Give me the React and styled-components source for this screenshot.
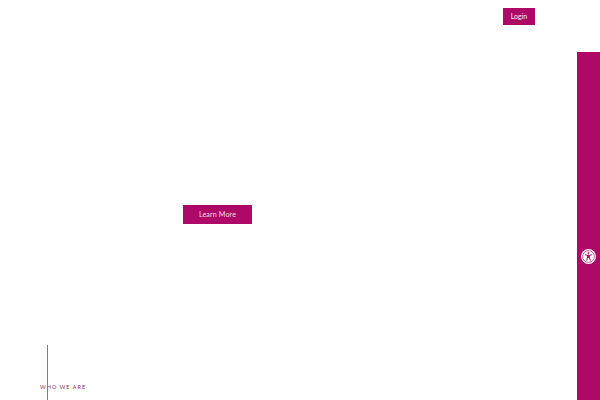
import styled, { createGlobalStyle } from "styled-components"

const Global = createGlobalStyle`
    html, body{
        margin: 0;
        padding: 0;
        background-color: #ffffff;
    }
    *{
        box-sizing: border-box;
    }
`

export default function App(){
    return (
        <Page>
            <Global />
            <Main>
                <Header>
                    <LoginButton>Login</LoginButton>
                </Header>
                <Hero>
                    <LearnButton>Learn More</LearnButton>
                </Hero>
                <Intro>
                    <IntroLabel>WHO WE ARE</IntroLabel>
                </Intro>
            </Main>
            <Sidebar>
                <AccessIcon viewBox="0 0 24 24" aria-label="Accessibility">
                    <circle cx="12" cy="12" r="12" fill="#fff" />
                    <circle cx="12" cy="12" r="9.4" fill="none" stroke="#ae0868" strokeWidth="1.1" />
                    <circle cx="12" cy="6.7" r="1.6" fill="#ae0868" />
                    <path
                        d="M6.8 9.2 L10.4 10.2 H13.6 L17.2 9.2 M10.6 10.4 V13.4 L9.2 18 M13.4 10.4 V13.4 L14.8 18 M10.6 13.2 H13.4"
                        fill="none"
                        stroke="#ae0868"
                        strokeWidth="1.6"
                        strokeLinecap="round"
                        strokeLinejoin="round"
                    />
                    <path d="M10.8 10.4 H13.2 V13.2 H10.8 Z" fill="#ae0868" />
                </AccessIcon>
            </Sidebar>
        </Page>
    )
}

const Page = styled.div`
    width: 600px;
    height: 400px;
    overflow: hidden;
    display: grid;
    grid-template-columns: 577px 23px;
    font-family: "Lato", "Liberation Sans", sans-serif;
`

const Main = styled.main`
    display: flex;
    flex-direction: column;
    height: 400px;
`

const Header = styled.header`
    display: flex;
    justify-content: flex-end;
    padding-top: 8px;
    padding-right: 42px;
`

const LoginButton = styled.button`
    width: 32px;
    height: 17px;
    padding: 0;
    border: none;
    background-color: #ae0868;
    color: #fdeef7;
    font-family: inherit;
    font-size: 7px;
    font-weight: 400;
    line-height: 17px;
`

const Hero = styled.section`
    padding-left: 183px;
    margin-top: 180px;
`

const LearnButton = styled.button`
    display: block;
    width: 69px;
    height: 19px;
    padding: 0;
    border: none;
    background-color: #ae0868;
    color: #f7dcec;
    font-family: inherit;
    font-size: 7.2px;
    font-weight: 400;
    letter-spacing: 0.1px;
    line-height: 19px;
`

const Intro = styled.section`
    position: relative;
    margin-top: auto;
    height: 55px;
    padding-left: 40px;
    padding-top: 38px;

    &::before{
        content: "";
        position: absolute;
        left: 47px;
        top: 0;
        bottom: 0;
        width: 1px;
        background-color: #d0509c;
    }
`

const IntroLabel = styled.span`
    display: block;
    color: #952a66;
    font-size: 5.5px;
    line-height: 8px;
    letter-spacing: 1px;
    white-space: nowrap;
`

const Sidebar = styled.aside`
    margin-top: 52px;
    height: 348px;
    background-color: #ae0868;
    display: flex;
    justify-content: center;
    padding-top: 197px;
`

const AccessIcon = styled.svg`
    width: 15px;
    height: 15px;
    display: block;
`
